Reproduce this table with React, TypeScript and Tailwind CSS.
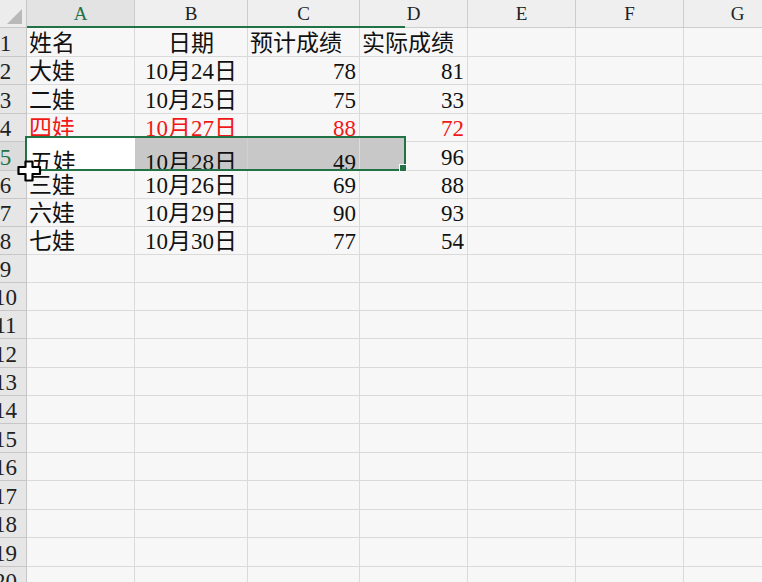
import React from "react";

type Align = "left" | "center" | "right";

const colDefs = [
  { key: "A", w: "w-[108px]" },
  { key: "B", w: "w-[113px]" },
  { key: "C", w: "w-[112px]" },
  { key: "D", w: "w-[108px]" },
  { key: "E", w: "w-[108px]" },
  { key: "F", w: "w-[108px]" },
  { key: "G", w: "w-[108px]" },
];

const rowHeights = [29, 28, 29, 28, 29, 28, 28, 28, 28, 28, 28, 29, 28, 28, 29, 28, 29, 28, 29, 28];

type Cell = { t: string; a: Align };
const data: Record<number, Cell[]> = {
  1: [
    { t: "姓名", a: "left" },
    { t: "日期", a: "center" },
    { t: "预计成绩", a: "left" },
    { t: "实际成绩", a: "left" },
  ],
  2: [
    { t: "大娃", a: "left" },
    { t: "10月24日", a: "center" },
    { t: "78", a: "right" },
    { t: "81", a: "right" },
  ],
  3: [
    { t: "二娃", a: "left" },
    { t: "10月25日", a: "center" },
    { t: "75", a: "right" },
    { t: "33", a: "right" },
  ],
  4: [
    { t: "四娃", a: "left" },
    { t: "10月27日", a: "center" },
    { t: "88", a: "right" },
    { t: "72", a: "right" },
  ],
  5: [
    { t: "", a: "left" },
    { t: "", a: "center" },
    { t: "", a: "right" },
    { t: "96", a: "right" },
  ],
  6: [
    { t: "三娃", a: "left" },
    { t: "10月26日", a: "center" },
    { t: "69", a: "right" },
    { t: "88", a: "right" },
  ],
  7: [
    { t: "六娃", a: "left" },
    { t: "10月29日", a: "center" },
    { t: "90", a: "right" },
    { t: "93", a: "right" },
  ],
  8: [
    { t: "七娃", a: "left" },
    { t: "10月30日", a: "center" },
    { t: "77", a: "right" },
    { t: "54", a: "right" },
  ],
};

const FONT = "font-['Liberation_Serif','Noto_Sans_CJK_SC',serif]";

function alignCls(a: Align) {
  if (a === "center") return "justify-center";
  if (a === "right") return "justify-end pr-[3px]";
  return "justify-start pl-[2px]";
}

function Cursor() {
  return (
    <svg className="absolute left-[17px] top-[160px]" width="25" height="22" viewBox="0 0 25 22">
      <path
        d="M8.5 1.5 H15.5 V7 H23 V14 H15.5 V20.5 H8.5 V14 H1.5 V7 H8.5 Z"
        fill="#ffffff"
        stroke="#000000"
        strokeWidth="2.2"
        strokeLinejoin="round"
      />
    </svg>
  );
}

export default function App() {
  return (
    <div className={`relative w-[762px] h-[582px] overflow-hidden bg-[#f7f7f7] ${FONT} text-[#111]`}>
      {/* Header row */}
      <div className="flex h-[28px]">
        <div className="relative shrink-0 w-[42px] -ml-[15px] h-[28px] bg-[#ececec] border-r border-b border-[#c6c6c6]">
          <div className="absolute right-[4px] bottom-[3px] w-0 h-0 border-l-[15px] border-l-transparent border-b-[15px] border-b-[#b9b9b9]" />
        </div>
        {colDefs.map((c, i) => (
          <div
            key={c.key}
            className={`${c.w} shrink-0 h-[28px] flex items-end justify-center pb-[2px] border-r border-b border-[#cdcdcd] text-[19px] leading-[22px] ${
              i === 0 ? "bg-[#e3e3e3] text-[#217346]" : "bg-[#efefef] text-[#222]"
            }`}
          >
            {c.key}
          </div>
        ))}
      </div>

      {/* Body rows */}
      {rowHeights.map((h, idx) => {
        const r = idx + 1;
        const cells = data[r];
        const red = r === 4;
        return (
          <div key={r} className={`flex ${h === 29 ? "h-[29px]" : "h-[28px]"}`}>
            <div
              className={`shrink-0 w-[42px] -ml-[15px] flex items-end justify-center border-r border-b border-[#c6c6c6] text-[23px] leading-[24px] ${
                r === 5 ? "bg-[#dcdcdc] text-[#217346]" : "bg-[#e6e6e6] text-[#222]"
              }`}
            >
              {r}
            </div>
            {colDefs.map((c, ci) => {
              const cell = cells && ci < 4 ? cells[ci] : undefined;
              return (
                <div
                  key={c.key}
                  className={`${c.w} shrink-0 flex items-end border-r border-b border-[#dadada] overflow-hidden whitespace-nowrap text-[23px] leading-[24px] ${
                    cell ? alignCls(cell.a) : ""
                  } ${red ? "text-[#f01818]" : ""}`}
                >
                  {cell ? cell.t : ""}
                </div>
              );
            })}
          </div>
        );
      })}

      {/* Green header underline for selected columns */}
      <div className="absolute left-[27px] top-[26px] w-[378px] h-[2px] bg-[#217346]" />

      {/* Dragged selection ghost */}
      <div className="absolute left-[25px] top-[136px] w-[381px] h-[35px] border-2 border-[#217346] overflow-hidden">
        <div className="flex h-full">
          <div className="w-[108px] shrink-0 bg-white flex items-end pl-[3px] text-[23px] leading-[24px] whitespace-nowrap -mb-[6px]">
            五娃
          </div>
          <div className="w-[113px] shrink-0 bg-[#c8c8c8] border-r border-[#d0d0d0] flex items-end justify-center text-[23px] leading-[24px] whitespace-nowrap -mb-[6px]">
            10月28日
          </div>
          <div className="w-[112px] shrink-0 bg-[#c8c8c8] border-r border-[#dcdcdc] flex items-end justify-end pr-[3px] text-[23px] leading-[24px] whitespace-nowrap -mb-[6px]">
            49
          </div>
          <div className="flex-1 bg-[#c8c8c8]" />
        </div>
      </div>
      {/* Fill handle */}
      <div className="absolute left-[399px] top-[164px] w-[8px] h-[8px] bg-[#217346] border border-white" />

      <Cursor />
    </div>
  );
}
